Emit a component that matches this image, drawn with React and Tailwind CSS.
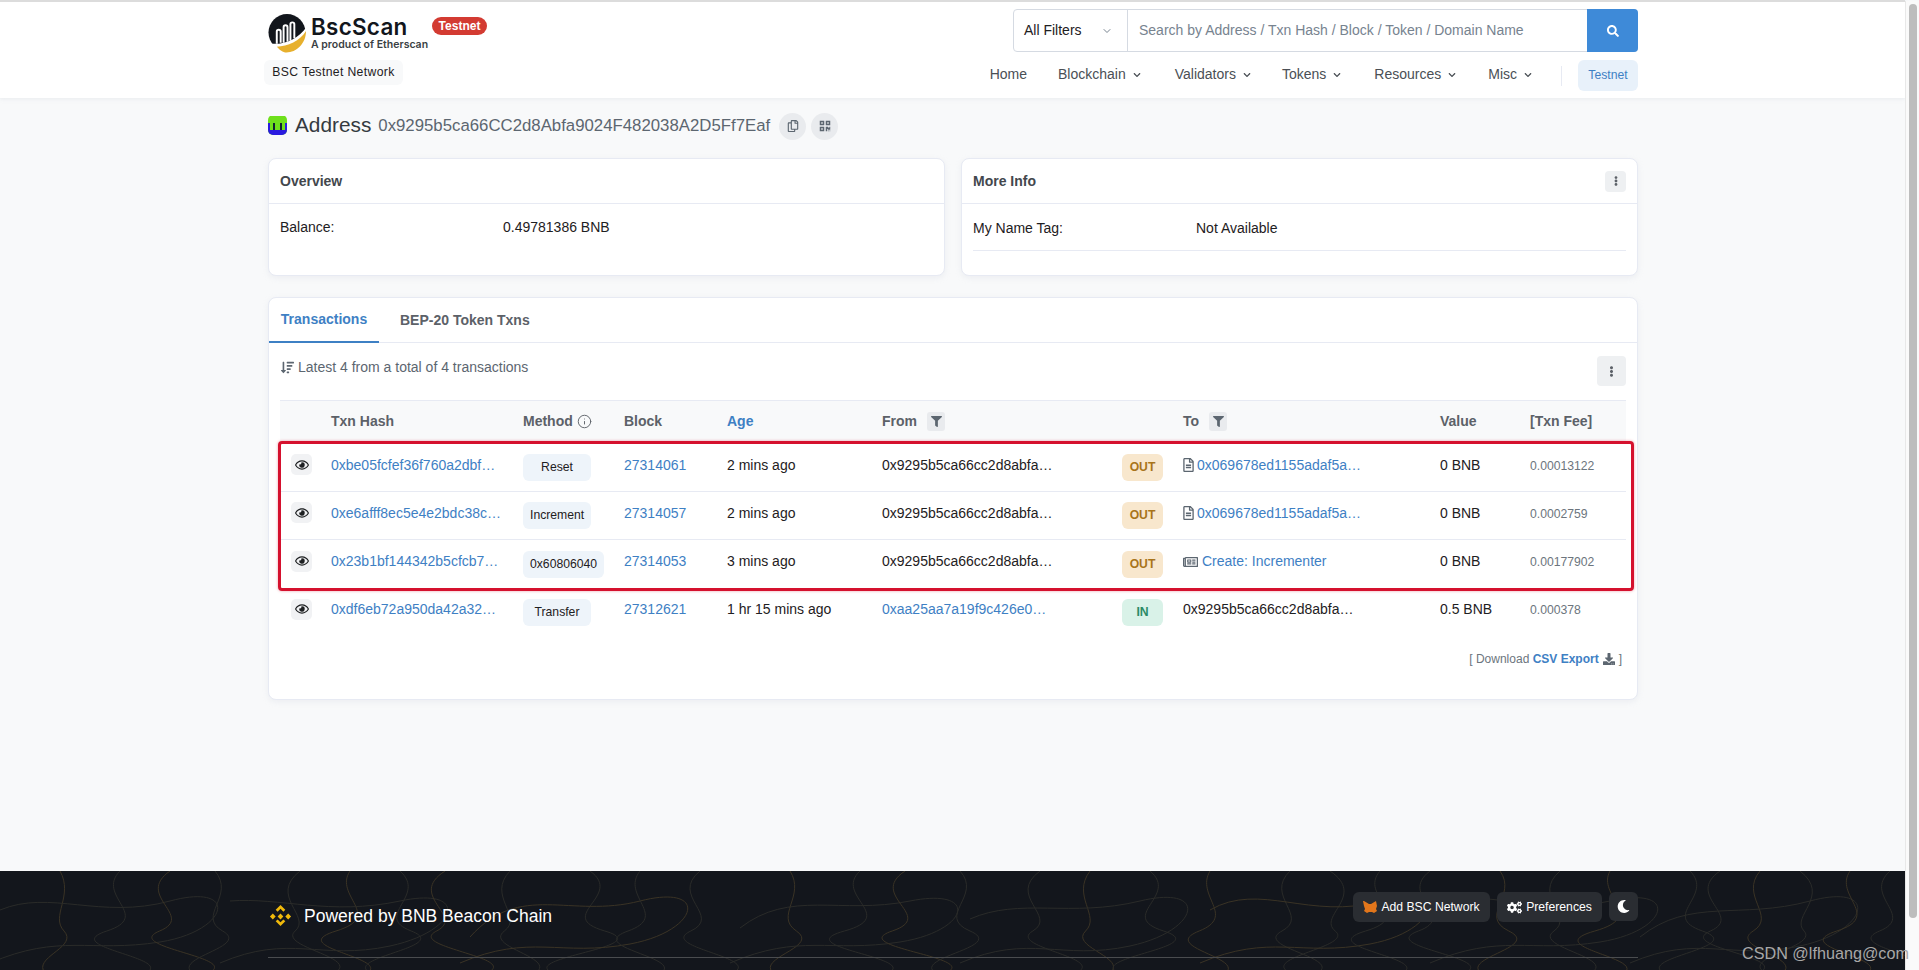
import React from "react";
import { ChevronDown, Info } from "lucide-react";
import { FaRegEye, FaFilter, FaSearch, FaMoon, FaCogs, FaDownload, FaEllipsisV, FaChevronDown, FaRegCopy, FaQrcode, FaSortAmountDown, FaRegFileAlt, FaRegNewspaper } from "react-icons/fa";

const font = { fontFamily: "'Liberation Sans', Arial, sans-serif" };

function Logo() {
  return (
    <svg width="39" height="40" viewBox="0 0 40 40" className="shrink-0">
      <circle cx="19.5" cy="19.5" r="19" fill="#12161c" />
      <path d="M9 31V18.5c0-2.5 4-2.5 4 0V30M16 30V14c0-2.5 4-2.5 4 0v15M23 28V11c0-2.5 4-2.5 4 0v14.5" stroke="#fff" strokeWidth="2" fill="none" />
      <path d="M3 31C18 32 31 26 40 13L40 40L0 40Z" fill="#fff" />
      <path d="M9 34C20 34 33 28 39 18C39 31 29 40 19 40C15 40 12 37 9 34Z" fill="#e7b02d" />
    </svg>
  );
}

function BnbIcon() {
  return (
    <svg width="25" height="25" viewBox="0 0 26 26" className="shrink-0" fill="#f0b90b">
      <path d="M13 1l5 5-2 2-3-3-3 3-2-2zM5 10l3 3-3 3-3-3zM21 10l3 3-3 3-3-3zM13 10l3 3-3 3-3-3zM8 18l2-2 3 3 3-3 2 2-5 5z" />
    </svg>
  );
}

function makeLines() {
  const out = [];
  const seeds = [60, 120, 170, 215, 300, 350, 400, 445, 510, 590, 640, 700, 790, 860, 905, 960, 1040, 1090, 1150, 1210, 1290, 1330, 1380, 1430, 1500, 1560, 1610, 1690, 1720, 1760, 1800, 1850, 1890];
  seeds.forEach((x, i) => {
    const a = 14 + ((i * 37) % 26);
    const b = 10 + ((i * 53) % 30);
    const dir = i % 3 === 0 ? 1 : -1;
    out.push(`M${x} 0C${x + dir * a} 25 ${x - dir * b} 45 ${x + dir * b * 0.4} 60S${x - dir * a * 1.6} 85 ${x - dir * a * 1.2} 99`);
    if (i % 4 === 1) out.push(`M${x - 120} ${30 + (i % 5) * 9}C${x - 70} ${10 + (i % 3) * 8} ${x - 20} ${50 - i % 7} ${x + 50} ${25 + (i % 4) * 5}S${x + 110} ${60} ${x + 40} ${70 + i % 6}S${x - 60} ${62} ${x - 130} ${92}`);
  });
  return out;
}
const contour = makeLines();

function Topo() {
  return (
    <svg className="absolute inset-0 w-full h-full" viewBox="0 0 1905 99" preserveAspectRatio="none" fill="none">
      {contour.map((d, i) => (
        <path key={i} d={d} stroke={i % 3 === 0 ? "#3a3325" : "#2a2b29"} strokeWidth="1" />
      ))}
    </svg>
  );
}

function Nav({ label, className }) {
  return (
    <span className={"flex items-center gap-[7px] " + className}>
      {label}
      <FaChevronDown className="w-[8px] h-[8px] mt-px text-[#4a4f55]" />
    </span>
  );
}

function Card({ children, className = "" }) {
  return (
    <div className={"bg-white border border-[#e7eaf3] rounded-lg shadow-[0_2px_6px_rgba(189,197,209,0.2)] " + className}>{children}</div>
  );
}

const GRID = "grid grid-cols-[51px_192px_101px_103px_155px_240px_61px_257px_90px_1fr] items-center";

const rows = [
  { hash: "0xbe05fcfef36f760a2dbf…", method: "Reset", block: "27314061", age: "2 mins ago", from: "0x9295b5ca66cc2d8abfa…", dir: "OUT", to: "0x069678ed1155adaf5a…", toLink: true, icon: "file", value: "0 BNB", fee: "0.00013122" },
  { hash: "0xe6afff8ec5e4e2bdc38c…", method: "Increment", block: "27314057", age: "2 mins ago", from: "0x9295b5ca66cc2d8abfa…", dir: "OUT", to: "0x069678ed1155adaf5a…", toLink: true, icon: "file", value: "0 BNB", fee: "0.0002759" },
  { hash: "0x23b1bf144342b5cfcb7…", method: "0x60806040", block: "27314053", age: "3 mins ago", from: "0x9295b5ca66cc2d8abfa…", dir: "OUT", to: "Create: Incrementer", toLink: true, icon: "news", value: "0 BNB", fee: "0.00177902" },
  { hash: "0xdf6eb72a950da42a32…", method: "Transfer", block: "27312621", age: "1 hr 15 mins ago", from: "0xaa25aa7a19f9c426e0…", fromLink: true, dir: "IN", to: "0x9295b5ca66cc2d8abfa…", value: "0.5 BNB", fee: "0.000378" },
];

export default function App() {
  return (
    <div style={font} className="relative h-[970px] w-[1919px] overflow-hidden bg-[#f8f9fa] text-[14px] text-[#1e2022]">
      <div className="flex h-full flex-col w-[1905px]">
        <header className="h-[98px] shrink-0 bg-white border-t-2 border-[#dcdcdc] shadow-[0_1px_4px_rgba(189,197,209,0.25)]">
          <div className="ml-[268px] mr-[267px] flex justify-between h-full">
            <div className="flex flex-col">
              <div className="flex items-start mt-[11px]">
                <Logo />
                <div className="ml-[4px] mt-[2px] w-[121px]">
                  <div className="text-[22.4px] leading-[24px] font-semibold tracking-[0.3px] text-[#12161c]" style={{ fontFamily: "Inter, sans-serif" }}>BscScan</div>
                  <div className="text-[10.5px] leading-[12px] font-semibold text-[#3a3f44]" style={{ fontFamily: "Inter, sans-serif" }}>A product of Etherscan</div>
                </div>
                <span className="mt-[4px] h-[18px] w-[55px] rounded-full bg-[#d33b32] text-white text-[12px] font-bold flex items-center justify-center">Testnet</span>
              </div>
              <div className="mt-[7px] -ml-[4px] h-[25px] w-[139px] rounded-md bg-[#f8f9fa] flex items-center justify-center text-[12.2px] tracking-[0.35px] text-[#1e2022]">BSC Testnet Network</div>
            </div>
            <div className="flex flex-col items-end">
              <div className="mt-[7px] flex h-[43px] w-[625px] rounded border border-[#d5dae2] bg-white">
                <div className="flex w-[114px] items-center justify-between pl-[10px] pr-[14px] border-r border-[#d5dae2] text-[#1e2022]">
                  All Filters
                  <ChevronDown className="w-[12px] h-[12px] text-[#77838f]" />
                </div>
                <div className="flex-1 pl-[11px] flex items-center text-[#77838f]">Search by Address / Txn Hash / Block / Token / Domain Name</div>
                <div className="w-[51px] -my-px -mr-px bg-[#3e8ad8] rounded-r flex items-center justify-center">
                  <FaSearch className="w-[12px] h-[12px] text-white" />
                </div>
              </div>
              <div className="mt-[8px] flex items-center text-[#4a4f55]">
                <span className="mr-[31px] -mt-[2px]">Home</span>
                <Nav label="Blockchain" className="mr-[34px] -mt-[2px]" />
                <Nav label="Validators" className="mr-[31px] -mt-[2px]" />
                <Nav label="Tokens" className="mr-[33px] -mt-[2px]" />
                <Nav label="Resources" className="mr-[32px] -mt-[2px]" />
                <Nav label="Misc" className="-mt-[2px]" />
                <span className="ml-[29px] mr-[16px] h-[20px] w-px bg-[#e7eaf3]" />
                <span className="h-[31px] w-[60px] rounded-md bg-[#e8f1fa] flex items-center justify-center text-[12.2px] text-[#3e80c4]">Testnet</span>
              </div>
            </div>
          </div>
        </header>

        <main className="flex-1 ml-[268px] mr-[267px]">
          <div className="flex items-center h-[54px] mb-[6px]">
            <svg width="19" height="20" viewBox="0 0 8 8" className="rounded-[5px] shrink-0" shapeRendering="crispEdges">
              <rect width="8" height="8" fill="#6fe01c" />
              <rect x="0" y="3" width="1" height="5" fill="#2a1be0" />
              <rect x="7" y="3" width="1" height="5" fill="#2a1be0" />
              <rect x="1" y="6" width="6" height="2" fill="#2a1be0" />
              <rect x="2" y="3" width="1" height="3" fill="#123" />
              <rect x="5" y="3" width="1" height="3" fill="#123" />
            </svg>
            <span className="ml-[8px] text-[20.8px] text-[#343a40]">Address</span>
            <span className="ml-[7px] mt-[2px] text-[16.8px] text-[#5c6670]">0x9295b5ca66CC2d8Abfa9024F482038A2D5Ff7Eaf</span>
            <span className="ml-[9px] mt-[2px] w-[27px] h-[27px] rounded-full bg-[#e9ebee] flex items-center justify-center">
              <FaRegCopy className="w-[12px] h-[12px] text-[#5c6670]" />
            </span>
            <span className="ml-[5px] mt-[2px] w-[27px] h-[27px] rounded-full bg-[#e9ebee] flex items-center justify-center">
              <FaQrcode className="w-[12px] h-[12px] text-[#5c6670]" />
            </span>
          </div>

          <div className="grid grid-cols-[677px_677px] justify-between">
            <Card className="h-[118px]">
              <div className="h-[45px] px-[11px] flex items-center border-b border-[#e7eaf3] font-bold text-[#43474d]">Overview</div>
              <div className="flex px-[11px] mt-[13px]">
                <span className="w-[223px]">Balance:</span>
                <span>0.49781386 BNB</span>
              </div>
            </Card>
            <Card className="h-[118px]">
              <div className="h-[45px] px-[11px] flex items-center justify-between border-b border-[#e7eaf3] font-bold text-[#43474d]">
                More Info
                <span className="w-[21px] h-[21px] rounded bg-[#eef0f2] flex items-center justify-center">
                  <FaEllipsisV className="w-[10px] h-[10px] text-[#5c6168]" />
                </span>
              </div>
              <div className="mx-[11px] flex border-b border-[#e7eaf3] pt-[14px] pb-[11px]">
                <span className="w-[223px]">My Name Tag:</span>
                <span>Not Available</span>
              </div>
            </Card>
          </div>

          <Card className="mt-[21px] h-[403px]">
            <div className="h-[45px] flex border-b border-[#e7eaf3] font-bold text-[#5c6168]">
              <span className="w-[110px] flex items-center justify-center text-[#3e80c4] border-b-2 border-[#3e80c4] -mb-px">Transactions</span>
              <span className="ml-[21px] flex items-center">BEP-20 Token Txns</span>
            </div>
            <div className="mx-[11px]">
              <div className="flex justify-between h-[57px]">
                <span className="flex items-center h-[48px] text-[#5c6670]">
                  <FaSortAmountDown className="w-[15px] h-[13px] mr-[3px] text-[#5c6670]" />
                  Latest 4 from a total of 4 transactions
                </span>
                <span className="mt-[13px] w-[29px] h-[30px] rounded bg-[#eef0f2] flex items-center justify-center">
                  <FaEllipsisV className="w-[11px] h-[11px] text-[#5c6168]" />
                </span>
              </div>
              <div className={GRID + " h-[44px] pb-[3px] bg-[#f8f9fa] border-t border-[#e7eaf3] font-bold text-[#5c6168]"}>
                <span />
                <span>Txn Hash</span>
                <span className="flex items-center gap-[4px]">Method <Info className="w-[15px] h-[15px] font-normal" strokeWidth={1.5} /></span>
                <span>Block</span>
                <span className="text-[#3e80c4]">Age</span>
                <span className="flex items-center gap-[10px]">From <span className="w-[18px] h-[19px] rounded-[3px] bg-[#e9ebee] flex items-center justify-center"><FaFilter className="w-[11px] h-[11px] text-[#5c6670]" /></span></span>
                <span />
                <span className="flex items-center gap-[10px]">To <span className="w-[18px] h-[19px] rounded-[3px] bg-[#e9ebee] flex items-center justify-center"><FaFilter className="w-[11px] h-[11px] text-[#5c6670]" /></span></span>
                <span>Value</span>
                <span>[Txn Fee]</span>
              </div>
              <div className="relative">
                {rows.map((r, i) => (
                  <div key={i} className={GRID + " h-[48px] " + (i < 2 ? "border-b border-[#e7eaf3]" : "")}>
                    <span className="ml-[11px] -mt-[6px] w-[21px] h-[21px] rounded-[5px] bg-[#f1f2f4] flex items-center justify-center">
                      <FaRegEye className="w-[14px] h-[14px] text-[#1e2022]" />
                    </span>
                    <span className="text-[#3e80c4] whitespace-nowrap -mt-[5px]">{r.hash}</span>
                    <span>
                      <span className="inline-flex items-center h-[27px] px-[7px] min-w-[68px] justify-center rounded-md bg-[#eef4fa] text-[12.2px] text-[#1e2022]">{r.method}</span>
                    </span>
                    <span className="text-[#3e80c4] -mt-[5px]">{r.block}</span>
                    <span className="-mt-[5px] whitespace-nowrap">{r.age}</span>
                    <span className={"-mt-[5px] whitespace-nowrap " + (r.fromLink ? "text-[#3e80c4]" : "")}>{r.from}</span>
                    <span className={"w-[41px] h-[27px] rounded-md flex items-center justify-center text-[12.2px] font-bold " + (r.dir === "OUT" ? "bg-[#f8e7cd] text-[#a8741a]" : "bg-[#d9f2e8] text-[#2b8a66]")}>{r.dir}</span>
                    <span className={"-mt-[5px] flex items-center whitespace-nowrap " + (r.toLink ? "text-[#3e80c4]" : "")}>
                      {r.icon === "file" && <FaRegFileAlt className="w-[11px] h-[14px] mr-[3px] text-[#5c6670]" />}
                      {r.icon === "news" && <FaRegNewspaper className="w-[15px] h-[14px] mr-[4px] text-[#5c6670]" />}
                      {r.to}
                    </span>
                    <span className="-mt-[5px] whitespace-nowrap">{r.value}</span>
                    <span className="-mt-[3px] text-[12.2px] text-[#6c757d]">{r.fee}</span>
                  </div>
                ))}
                <div className="absolute left-[-2px] right-[-8px] top-[-3px] h-[150px] rounded border-[3px] border-[#d5112e] shadow-[0_0_3px_rgba(213,17,46,0.4)]" />
              </div>
              <div className="mt-[5px] mr-[4px] h-[36px] flex items-center justify-end text-[12px] text-[#6c757d]">
                [ Download&nbsp;<span className="font-bold text-[#3e80c4]">CSV Export</span>
                <FaDownload className="w-[12px] h-[12px] mx-[4px] text-[#5c6670]" />]
              </div>
            </div>
          </Card>
        </main>

        <footer className="relative h-[99px] shrink-0 bg-[#13161c] text-white">
          <Topo />
          <div className="relative ml-[268px] mr-[267px] h-full flex flex-col">
            <div className="flex justify-between h-[87px] border-b border-[#4a4c4f]">
              <div className="flex items-center h-[87px] pt-[3px]">
                <BnbIcon />
                <span className="ml-[11px] text-[17.5px]">Powered by BNB Beacon Chain</span>
              </div>
              <div className="flex mt-[21px] gap-[7px] text-[12.2px]">
                <span className="h-[30px] w-[137px] rounded-md bg-[#2a2d32] flex items-center justify-center gap-[4px]">
                  <svg width="14" height="13" viewBox="0 0 14 13"><path d="M1 0l5 3h2l5-3 1 5-1 3 1 2-3 2-2-1H6l-2 1-3-2 1-2-1-3-1-5z" fill="#e2761b" /></svg>
                  Add BSC Network
                </span>
                <span className="h-[30px] w-[105px] rounded-md bg-[#2a2d32] flex items-center justify-center gap-[4px]">
                  <FaCogs className="w-[15px] h-[13px]" />
                  Preferences
                </span>
                <span className="h-[29px] w-[29px] rounded-md bg-[#2a2d32] flex items-center justify-center">
                  <FaMoon className="w-[13px] h-[13px]" />
                </span>
              </div>
            </div>
          </div>
        </footer>
      </div>

      <div className="absolute top-[1px] right-0 bottom-0 w-[14px] bg-[#fafafa] border-l border-[#e8e8e8]">
        <div className="ml-[3px] mt-[3px] w-[8px] h-[914px] rounded-full bg-[#bdbdbd]" />
      </div>
      <span className="absolute left-[1742px] top-[941px] whitespace-nowrap text-[16.2px] text-[#a8a8a8]">CSDN @lfhuang@com</span>
    </div>
  );
}
